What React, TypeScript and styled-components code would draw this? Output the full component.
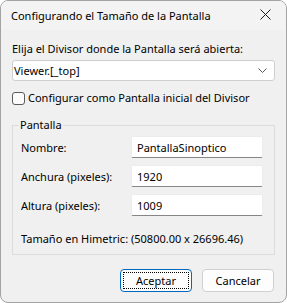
import styled, {createGlobalStyle} from 'styled-components';

const GlobalStyle = createGlobalStyle`
	html, body {
		margin: 0;
		padding: 0;
		background: #ffffff;
	}
	body {
		font-family: "Noto Sans", "Liberation Sans", sans-serif;
		font-size: 11px;
		color: #000000;
	}
`;

const Window = styled.div`
	box-sizing: border-box;
	width: 287px;
	height: 303px;
	border: 1px solid #a3a3a3;
	border-radius: 8px;
	background: #f0f0f0;
	overflow: hidden;
	display: flex;
	flex-direction: column;
`;

const TitleBar = styled.div`
	height: 29px;
	background: #f3f3f3;
	display: flex;
	align-items: center;
	justify-content: space-between;
	padding: 0 10px 0 10px;
`;

const Title = styled.span`
	line-height: 16px;
	margin-top: 1px;
`;

const CloseIcon = styled.svg`
	width: 11px;
	height: 11px;
	margin-right: 5px;
	margin-top: -2px;
`;

const Body = styled.div`
	display: flex;
	flex-direction: column;
	padding: 0 11px;
	white-space: nowrap;
`;

const Label = styled.div`
	line-height: 16px;
	margin-top: 11px;
`;

const Combo = styled.div`
	box-sizing: border-box;
	height: 21px;
	margin-top: 3px;
	border: 1px solid #cfcfcf;
	border-radius: 3px;
	background: #ffffff;
	display: flex;
	align-items: center;
	justify-content: space-between;
	padding: 0 7px 0 1px;
`;

const Chevron = styled.svg`
	width: 9px;
	height: 5px;
`;

const CheckRow = styled.label`
	display: flex;
	align-items: center;
	gap: 3px;
	margin-top: 9px;
	line-height: 16px;
`;

const Box = styled.span`
	box-sizing: border-box;
	width: 13px;
	height: 13px;
	border: 1px solid #5a5a5a;
	border-radius: 3px;
	background: #fbfbfb;
`;

const Group = styled.fieldset`
	box-sizing: border-box;
	height: 138px;
	margin: 11px 0 0 0;
	padding: 3px 11px 0 8px;
	border: 1px solid #dcdcdc;
	display: flex;
	flex-direction: column;
`;

const Legend = styled.legend`
	padding: 0 1px;
	margin-left: -2px;
	line-height: 16px;
`;

const FieldRow = styled.div`
	display: flex;
	align-items: center;
	justify-content: space-between;
	margin-bottom: 7px;
`;

const Input = styled.div`
	box-sizing: border-box;
	width: 132px;
	height: 22px;
	background: #ffffff;
	border: 1px solid #ececec;
	border-bottom: 1px solid #868686;
	border-radius: 2px;
	display: flex;
	align-items: center;
	padding-left: 5px;
`;

const Info = styled.div`
	line-height: 16px;
	margin-top: 8px;
`;

const Buttons = styled.div`
	display: flex;
	justify-content: flex-end;
	gap: 10px;
	margin: 14px 1px 0 0;
`;

const Button = styled.div<{$primary?: boolean}>`
	box-sizing: border-box;
	position: relative;
	width: 72px;
	height: 23px;
	background: #fdfdfd;
	border: 1px solid ${p => (p.$primary ? '#0067c0' : '#d0d0d0')};
	border-radius: 4px;
	display: flex;
	align-items: center;
	justify-content: center;
	${p =>
		p.$primary &&
		`&::after {
			content: '';
			position: absolute;
			inset: 2px;
			border: 1px dotted #000000;
		}`}
`;

export default function App() {
	return (
		<>
			<GlobalStyle />
			<Window>
				<TitleBar>
					<Title>Configurando el Tamaño de la Pantalla</Title>
					<CloseIcon viewBox="0 0 11 11">
						<path d="M0.5 0.5 L10.5 10.5 M10.5 0.5 L0.5 10.5" stroke="#1a1a1a" strokeWidth="1" />
					</CloseIcon>
				</TitleBar>
				<Body>
					<Label>Elija el Divisor donde la Pantalla será abierta:</Label>
					<Combo>
						<span>Viewer.[_top]</span>
						<Chevron viewBox="0 0 9 5">
							<path d="M0.5 0.5 L4.5 4.5 L8.5 0.5" stroke="#555" fill="none" />
						</Chevron>
					</Combo>
					<CheckRow>
						<Box />
						<span>Configurar como Pantalla inicial del Divisor</span>
					</CheckRow>
					<Group>
						<Legend>Pantalla</Legend>
						<FieldRow>
							<span>Nombre:</span>
							<Input>PantallaSinoptico</Input>
						</FieldRow>
						<FieldRow>
							<span>Anchura (pixeles):</span>
							<Input>1920</Input>
						</FieldRow>
						<FieldRow>
							<span>Altura (pixeles):</span>
							<Input>1009</Input>
						</FieldRow>
						<Info>Tamaño en Himetric: (50800.00 x 26696.46)</Info>
					</Group>
					<Buttons>
						<Button $primary>Aceptar</Button>
						<Button>Cancelar</Button>
					</Buttons>
				</Body>
			</Window>
		</>
	);
}
